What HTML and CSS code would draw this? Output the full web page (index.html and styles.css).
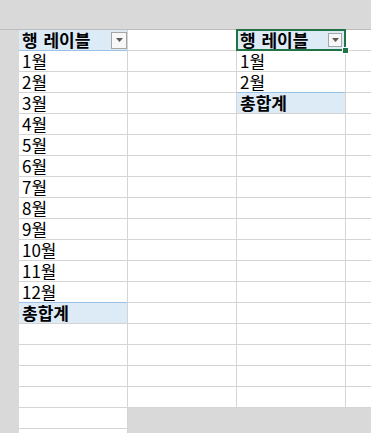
FILE: index.html
```html
<!DOCTYPE html>
<html lang="ko">
<head>
<meta charset="utf-8">
<link rel="stylesheet" href="styles.css">
</head>
<body>
<div class="top-band"></div>
<div class="sheet">
  <div class="row-strip"></div>
  <div class="grid">
    <div class="cell head"><span class="hd-text">행 레이블</span><span class="dd"><svg width="7" height="4" viewBox="0 0 7 4"><path d="M0 0H7L3.5 4Z" fill="#595959"/></svg></span></div>
    <div class="cell"></div>
    <div class="cell head sel"><span class="hd-text">행 레이블</span><span class="dd dd-r"><svg width="7" height="4" viewBox="0 0 7 4"><path d="M0 0H7L3.5 4Z" fill="#595959"/></svg></span><span class="handle"></span></div>
    <div class="cell"></div>

    <div class="cell">1월</div><div class="cell"></div><div class="cell">1월</div><div class="cell"></div>
    <div class="cell">2월</div><div class="cell"></div><div class="cell">2월</div><div class="cell"></div>
    <div class="cell">3월</div><div class="cell"></div><div class="cell total">총합계</div><div class="cell"></div>
    <div class="cell">4월</div><div class="cell"></div><div class="cell"></div><div class="cell"></div>
    <div class="cell">5월</div><div class="cell"></div><div class="cell"></div><div class="cell"></div>
    <div class="cell">6월</div><div class="cell"></div><div class="cell"></div><div class="cell"></div>
    <div class="cell">7월</div><div class="cell"></div><div class="cell"></div><div class="cell"></div>
    <div class="cell">8월</div><div class="cell"></div><div class="cell"></div><div class="cell"></div>
    <div class="cell">9월</div><div class="cell"></div><div class="cell"></div><div class="cell"></div>
    <div class="cell">10월</div><div class="cell"></div><div class="cell"></div><div class="cell"></div>
    <div class="cell">11월</div><div class="cell"></div><div class="cell"></div><div class="cell"></div>
    <div class="cell">12월</div><div class="cell"></div><div class="cell"></div><div class="cell"></div>
    <div class="cell total">총합계</div><div class="cell"></div><div class="cell"></div><div class="cell"></div>
    <div class="cell"></div><div class="cell"></div><div class="cell"></div><div class="cell"></div>
    <div class="cell"></div><div class="cell"></div><div class="cell"></div><div class="cell"></div>
    <div class="cell"></div><div class="cell"></div><div class="cell"></div><div class="cell"></div>
    <div class="cell"></div><div class="cell"></div><div class="cell"></div><div class="cell"></div>
    <div class="cell"></div><div class="outside"></div>
    <div class="cell"></div>
  </div>
</div>
</body>
</html>
```

FILE: styles.css
```css
html, body {
  margin: 0;
  padding: 0;
  width: 371px;
  height: 433px;
  overflow: hidden;
  background: #d9d9d9;
  font-family: "Noto Sans CJK KR", "Noto Sans", sans-serif;
  font-size: 17px;
  color: #000;
}

.top-band {
  height: 29px;
  background: #d9d9d9;
  border-bottom: 1px solid #bdbdbd;
}

.sheet {
  display: flex;
}

.row-strip {
  width: 19px;
  flex: none;
  background: #d9d9d9;
}

.grid {
  flex: 1;
  display: grid;
  grid-template-columns: 108px 108px 108px 1fr;
  grid-auto-rows: 20px;
  column-gap: 1px;
  row-gap: 1px;
  background: #d4d4d4;
}

.cell {
  background: #fff;
  padding-left: 3px;
  line-height: 20px;
  white-space: nowrap;
  position: relative;
}

.head {
  background: #ddebf7;
  font-weight: bold;
  box-shadow: 0 1px 0 #9bc2e6;
  display: flex;
  align-items: center;
}

.hd-text {
  flex: 1;
  word-spacing: 1px;
}

.dd {
  width: 14px;
  height: 15px;
  border: 1px solid #a6a6a6;
  background: #f7f7f7;
  display: flex;
  align-items: center;
  justify-content: center;
}

.dd-r {
  margin-right: 3px;
  width: 12px;
  height: 12px;
}

.total {
  background: #ddebf7;
  font-weight: bold;
  box-shadow: 0 -1px 0 #9bc2e6;
}

.sel {
  z-index: 2;
}

.sel::after {
  content: "";
  position: absolute;
  left: -1px;
  top: -1px;
  right: -1px;
  bottom: -1px;
  border: 2px solid #217346;
  pointer-events: none;
}

.handle {
  position: absolute;
  right: -4px;
  bottom: -4px;
  width: 5px;
  height: 5px;
  background: #217346;
  border: 1px solid #fff;
  z-index: 3;
}

.outside {
  grid-column: 2 / 5;
  grid-row: 19 / 21;
  background: #d9d9d9;
}
```
